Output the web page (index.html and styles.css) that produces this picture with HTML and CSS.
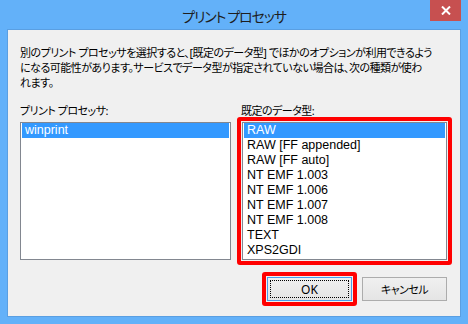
FILE: index.html
```html
<!DOCTYPE html>
<html lang="ja">
<head>
<meta charset="utf-8">
<title>プリント プロセッサ</title>
<link rel="stylesheet" href="styles.css">
</head>
<body>
<div class="window">
  <div class="titlebar">
    <div class="title">プリント プロセッサ</div>
    <div class="close">
      <svg width="10" height="9" viewBox="0 0 10 9"><path d="M1 0.5 L9 8.5 M9 0.5 L1 8.5" stroke="#fff" stroke-width="2" fill="none"/></svg>
    </div>
  </div>
  <div class="client">
    <p class="desc jp">別のプリント プロセッサを選択すると、[既定のデータ型] でほかのオプションが利用できるよう<br>になる可能性があります。サービスでデータ型が指定されていない場合は、次の種類が使わ<br>れます。</p>
    <div class="columns">
      <div class="col">
        <div class="label jp">プリント プロセッサ:</div>
        <ul class="listbox">
          <li class="sel">winprint</li>
        </ul>
      </div>
      <div class="col">
        <div class="label label-right jp">既定のデータ型:</div>
        <div class="mark mark-list">
          <ul class="listbox listbox-inner">
            <li class="sel">RAW</li>
            <li>RAW [FF appended]</li>
            <li>RAW [FF auto]</li>
            <li>NT EMF 1.003</li>
            <li>NT EMF 1.006</li>
            <li>NT EMF 1.007</li>
            <li>NT EMF 1.008</li>
            <li>TEXT</li>
            <li>XPS2GDI</li>
          </ul>
        </div>
      </div>
    </div>
    <div class="buttons">
      <div class="mark mark-btn">
        <button class="btn btn-default"><span class="focus">OK</span></button>
      </div>
      <button class="btn jp">キャンセル</button>
    </div>
  </div>
</div>
</body>
</html>
```
FILE: styles.css
```css
html, body {
  margin: 0;
  padding: 0;
}
body {
  width: 468px;
  height: 324px;
  overflow: hidden;
  background: #63b1f9;
  font-family: "Noto Sans", "Noto Sans CJK JP", sans-serif;
  font-feature-settings: "palt";
  color: #000;
}
.jp {
  font-size: 11px;
  letter-spacing: -0.5px;
}
.window {
  display: flex;
  flex-direction: column;
  height: 324px;
  box-sizing: border-box;
}
.titlebar {
  height: 30px;
  display: grid;
  grid-template-columns: 1fr auto 1fr;
  align-items: start;
}
.title {
  grid-column: 2;
  font-family: "Noto Sans CJK JP", sans-serif;
  font-size: 14px;
  letter-spacing: -1.1px;
  line-height: 30px;
  padding-top: 1px;
  color: #1e1e1e;
}
.close {
  grid-column: 3;
  justify-self: end;
  width: 31px;
  height: 21px;
  margin-right: 7px;
  background: #c75050;
  display: flex;
  align-items: center;
  justify-content: center;
}
.client {
  flex: 1;
  margin: 0 8px 8px 8px;
  background: #f0f0f0;
  box-shadow: 0 0 0 1px #5a9fe2;
  padding: 15px 13px 15px 12px;
  font-size: 12px;
}
.desc {
  margin: 0 0 13px 0;
  line-height: 15px;
  height: 45px;
  white-space: nowrap;
}
.columns {
  display: grid;
  grid-template-columns: 211px 205px;
  column-gap: 11px;
}
.label {
  line-height: 15px;
  height: 15px;
  margin-bottom: 4px;
  white-space: nowrap;
}
.label-right {
  margin-left: -1px;
}
.listbox {
  list-style: none;
  margin: 0;
  height: 138px;
  box-sizing: border-box;
  border: 1px solid #828790;
  background: #fff;
  padding: 0 1px;
  font-family: "Liberation Sans", Arial, sans-serif;
  font-size: 12.5px;
}
.listbox li {
  height: 15px;
  line-height: 15px;
  padding-left: 3px;
  white-space: nowrap;
}
.listbox li.sel {
  background: #3399ff;
  color: #fff;
}
.mark {
  border: 4px solid #ff0000;
  padding: 1px;
  border-radius: 3px;
  margin: -5px;
}
.mark-list {
  background: #f0f0f0;
}
.buttons {
  display: flex;
  justify-content: flex-end;
  gap: 10px;
  margin-top: 17px;
}
.mark-btn {
  display: flex;
}
.btn {
  width: 85px;
  height: 24px;
  box-sizing: border-box;
  border: 1px solid #acacac;
  background: linear-gradient(#f0f0f0, #e5e5e5);
  font-family: "Noto Sans", "Noto Sans CJK JP", sans-serif;
  font-feature-settings: "palt";
  font-size: 12px;
  color: #000;
  padding: 0;
  margin: 0;
  display: flex;
  align-items: center;
  justify-content: center;
}
.btn.jp {
  font-size: 11px;
}
.btn-default {
  border-color: #4a9ce8;
  padding: 2px;
}
.focus {
  flex: 1;
  align-self: stretch;
  border: 1px dotted #000;
  display: flex;
  align-items: center;
  justify-content: center;
}
```
